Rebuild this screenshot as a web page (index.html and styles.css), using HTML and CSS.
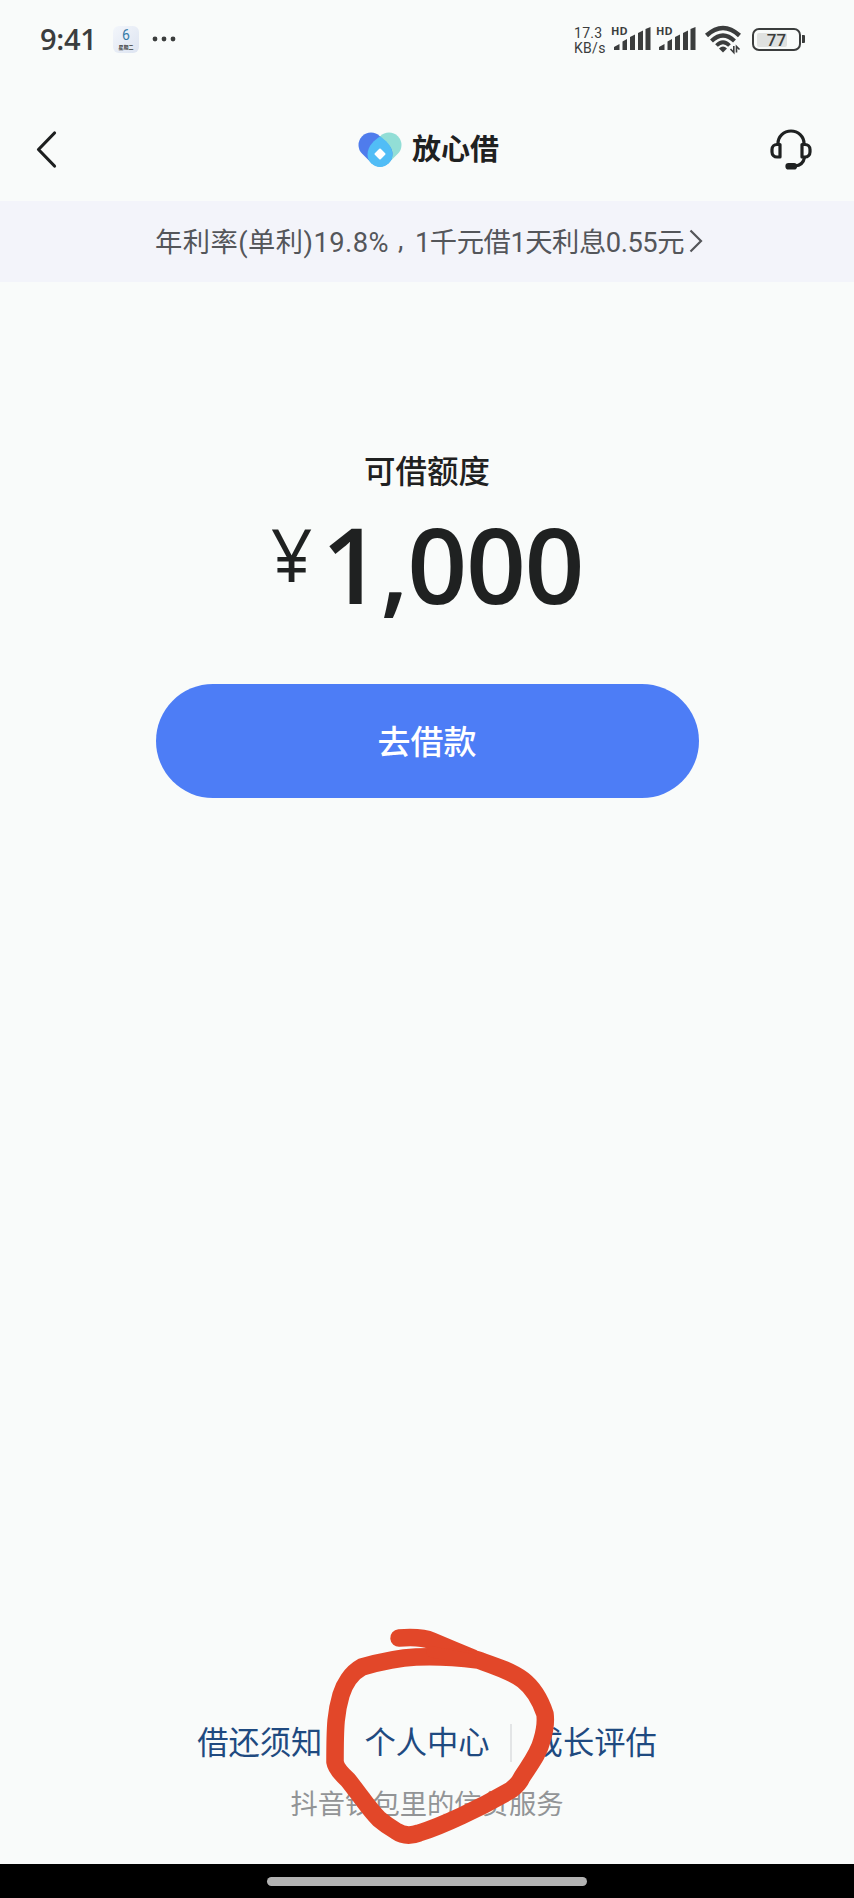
FILE: index.html
```html
<!DOCTYPE html>
<html lang="zh-CN">
<head>
    <meta charset="UTF-8">
    <meta name="viewport" content="width=device-width, initial-scale=1.0">
    <title>放心借</title>
    <link rel="stylesheet" href="styles.css">
</head>
<body>
    <div class="screen">
        <div class="status-bar">
            <div class="status-left">
                <span class="time">9:41</span>
                <div class="calendar">
                    <span class="calendar-day">6</span>
                    <span class="calendar-week">星期二</span>
                </div>
                <svg class="dots" width="24" height="6" viewBox="0 0 24 6" fill="#3b3d3d">
                    <circle cx="3" cy="3" r="2.4"/>
                    <circle cx="12" cy="3" r="2.4"/>
                    <circle cx="21" cy="3" r="2.4"/>
                </svg>
            </div>
            <div class="status-right">
                <div class="speed">
                    <span>17.3</span>
                    <span>KB/s</span>
                </div>
                <div class="signal">
                    <span class="hd">HD</span>
                    <svg width="38" height="24" viewBox="0 0 38 24" fill="#3b3d3d">
                        <path d="M0 23v-3l5.500-3v6zM8.500 23v-8.500l4.500-2.500v11zM16 23V10l5-2.500V23zM24 23V6l5-2.500V23zM31.500 23V2l5-2v23z"/>
                    </svg>
                </div>
                <div class="signal">
                    <span class="hd">HD</span>
                    <svg width="38" height="24" viewBox="0 0 38 24" fill="#3b3d3d">
                        <path d="M0 23v-3l5.500-3v6zM8.500 23v-8.500l4.500-2.500v11zM16 23V10l5-2.500V23zM24 23V6l5-2.500V23zM31.500 23V2l5-2v23z"/>
                    </svg>
                </div>
                <svg class="wifi" width="36" height="27" viewBox="0 0 36 27" fill="none" stroke="#3b3d3d">
                    <path d="M1.500 9.500Q18-5.500 34.500 9.500" stroke-width="4.500"/>
                    <path d="M6.500 15Q18 4 29.500 15" stroke-width="4.200"/>
                    <path d="M11.500 19.500Q18 13 24.500 19.500" stroke-width="3.800"/>
                    <path d="M14 22.500Q18 18.500 22 22.500L18 26.500z" fill="#3b3d3d" stroke="none"/>
                    <path d="M28.800 20v6.500L25.500 23M31.500 26.500V20.500L34.500 23.500" stroke-width="1.600"/>
                </svg>
                <div class="battery">
                    <div class="battery-body"><div class="battery-level"></div><span>77</span></div>
                    <div class="battery-tip"></div>
                </div>
            </div>
        </div>

        <div class="nav">
            <svg class="back" width="22" height="38" viewBox="0 0 22 38" fill="none" stroke="#1d1f1f" stroke-width="3.200" stroke-linecap="round" stroke-linejoin="round">
                <path d="M18.500 2L2.500 18.500L18.500 35"/>
            </svg>
            <div class="brand">
                <svg width="44" height="36" viewBox="0 0 44 36" fill="none" stroke-linecap="round">
                    <path d="M31 13L22 22" stroke="#92ded6" stroke-width="25"/>
                    <path d="M13 13L22 22" stroke="#4f7cec" stroke-width="25"/>
                    <path d="M22 4.500C27 7.500 34.500 14 34.500 22.500A12.500 12.500 0 0 1 9.500 22.500C9.500 14 17 7.500 22 4.500z" fill="#51bdf6"/>
                    <path d="M22 17.500L26.500 22L22 26.500L17.500 22z" fill="#fff" stroke="#fff" stroke-width="2" stroke-linejoin="round"/>
                </svg>
                <span>放心借</span>
            </div>
            <svg class="service" width="44" height="42" viewBox="0 0 44 42" fill="none" stroke="#1f2121" stroke-width="3.200" stroke-linejoin="round">
                <path d="M9 15.500V14.500A13 12.500 0 0 1 35 14.500V15.500"/>
                <path d="M11 15.500H8A5 5 0 0 0 3 20.500V23A5 5 0 0 0 8 28H11z"/>
                <path d="M33 15.500H36A5 5 0 0 1 41 20.500V23A5 5 0 0 1 36 28H33z"/>
                <path d="M35.500 28.500Q34 36.500 26 37"/>
                <rect x="18" y="35.500" width="8.500" height="3.500" rx="1.500" fill="#1f2121"/>
            </svg>
        </div>

        <div class="rate">
            <span class="yearly">年利率(单利)19.8%</span>
            <span class="comma">,</span>
            <span class="interest">1千元借1天利息0.55元</span>
            <svg width="14" height="24" viewBox="0 0 14 24" fill="none" stroke="#54565a" stroke-width="2.200">
                <path d="M1.500 1.500L12 12L1.500 22.500"/>
            </svg>
        </div>

        <div class="quota">
            <div class="quota-label">可借额度</div>
            <div class="amount">
                <span class="currency">¥</span>
                <span class="number">1,000</span>
            </div>
            <button class="borrow-btn">去借款</button>
        </div>

        <div class="footer">
            <div class="links">
                <a>借还须知</a>
                <a>个人中心</a>
                <a>成长评估</a>
            </div>
            <div class="source">抖音钱包里的信贷服务</div>
            <!-- hand-drawn marker around 个人中心 -->
            <svg class="marker" width="240" height="230" viewBox="0 0 240 230" fill="none" stroke="#e24729" stroke-width="17.500" stroke-linecap="round" stroke-linejoin="round">
                <path d="M79 16C92 15 103 15 112 19C126 25 138 30 153 36"/>
                <path d="M158 38C134 35 114 34 96 35C76 36 56 41 42 45C31 51 24 63 21 73C16 90 15 102 15 140Q16 147 28 158C40 173 49 187 59 197C66 203 71 206 76 209Q86 216 99 211C122 204 160 186 191 168Q199 162 202 155C211 141 219 131 222 118C225 108 226 100 225 92C220 77 212 65 203 58C191 49 175 44 158 38z"/>
                <path d="M112 30L150 37" stroke-width="11"/>
            </svg>
        </div>

        <div class="home-bar"><div class="home-pill"></div></div>
    </div>
</body>
</html>
```

FILE: styles.css
```css
* {
    box-sizing: border-box;
}

body {
    margin: 0;
    font-family: Roboto, "Noto Sans CJK SC", sans-serif;
    background: #f9fbfa;
    color: #1f2121;
}

.screen {
    width: 854px;
    height: 1898px;
    display: flex;
    flex-direction: column;
    overflow: hidden;
}

svg {
    display: block;
    flex: none;
    overflow: visible;
}

/* Status bar */
.status-bar {
    height: 80px;
    padding: 0 49px 0 40px;
    display: flex;
    justify-content: space-between;
    color: #3b3d3d;
}

.status-left,
.status-right {
    height: 78px;
    display: flex;
    align-items: center;
}

.time {
    font-family: "Open Sans", sans-serif;
    font-size: 29px;
    font-weight: 600;
    line-height: 40px;
    width: 73px;
    letter-spacing: -0.3px;
}

.calendar {
    width: 26px;
    height: 27px;
    border-radius: 6px;
    background: linear-gradient(135deg, #f3f6fb, #dde4f1);
    display: flex;
    flex-direction: column;
    align-items: center;
}

.calendar-day {
    font-size: 14px;
    line-height: 19px;
    color: #387da8;
}

.calendar-week {
    font-size: 5px;
    line-height: 4px;
    font-weight: 700;
}

.dots {
    margin-left: 13px;
}

.speed {
    width: 40px;
    display: flex;
    flex-direction: column;
    font-size: 14px;
    line-height: 15px;
    padding-top: 3px;
    letter-spacing: 0.3px;
    white-space: nowrap;
}

.signal {
    position: relative;
    width: 38px;
    margin-right: 7px;
}

.hd {
    position: absolute;
    left: -3px;
    top: -2px;
    font-size: 11px;
    line-height: 11px;
    font-weight: 700;
    font-family: "Open Sans", sans-serif;
}

.wifi {
    margin-left: 1px;
    margin-right: 11px;
}

.battery {
    display: flex;
    align-items: center;
    gap: 1px;
}

.battery-body {
    width: 49px;
    height: 23px;
    border: 2px solid #3b3d3d;
    border-radius: 7px;
    padding: 3px;
    display: grid;
    align-items: center;
}

.battery-level,
.battery-body span {
    grid-area: 1 / 1;
}

.battery-level {
    width: 30px;
    height: 14px;
    border-radius: 2px;
    background: #dfe1e0;
}

.battery-body span {
    text-align: center;
    font-size: 17px;
    line-height: 14px;
    font-weight: 500;
}

.battery-tip {
    width: 3px;
    height: 8px;
    border-radius: 0 1px 1px 0;
    background: #3b3d3d;
}

/* Header */
.nav {
    height: 121px;
    padding: 18px 41px 0 36px;
    display: flex;
    align-items: center;
    justify-content: space-between;
}

.brand {
    display: flex;
    align-items: center;
    gap: 10px;
    margin-left: 30px;
    font-size: 29px;
    line-height: 40px;
    font-weight: 700;
}

.brand span {
    margin-top: 1px;
}

/* Rate notice */
.rate {
    height: 81px;
    padding: 0 0 4px 155px;
    background: #f3f4fa;
    display: flex;
    align-items: center;
    font-size: 27.3px;
    color: #54565a;
    white-space: nowrap;
}

.yearly {
    letter-spacing: 0.45px;
}

.comma {
    width: 26px;
    padding-left: 9px;
}

.interest {
    letter-spacing: -0.45px;
}

.rate svg {
    margin: 2px 0 0 5px;
}

/* Quota */
.quota {
    flex: 1;
    display: flex;
    flex-direction: column;
    align-items: center;
}

.quota-label {
    margin-top: 168px;
    font-size: 31.5px;
    line-height: 46px;
    font-weight: 500;
}

.amount {
    height: 127px;
    margin-top: 6px;
    display: flex;
    align-items: flex-start;
    font-family: "Open Sans", sans-serif;
    font-weight: 600;
}

.currency {
    font-size: 73px;
    line-height: 86px;
    margin-top: 9px;
    margin-right: 9px;
    font-weight: 500;
}

.number {
    font-size: 105px;
    line-height: 124px;
    letter-spacing: -1.4px;
}

.borrow-btn {
    width: 543px;
    height: 114px;
    margin-top: 55px;
    padding: 0 0 3px;
    border: none;
    border-radius: 57px;
    background: #4d7df6;
    color: #fff;
    font-family: inherit;
    font-size: 33px;
    font-weight: 500;
}

/* Footer */
.footer {
    position: relative;
    height: 145px;
    display: flex;
    flex-direction: column;
    align-items: center;
}

.links {
    display: flex;
    color: #1f4a80;
    font-size: 31.3px;
    line-height: 38px;
    margin-top: 5px;
}

.links a {
    padding: 1px 20px 0;
    height: 38px;
    border-right: 2px solid #e3e5e6;
}

.links a:last-child {
    border-right: none;
}

.source {
    margin-top: 24px;
    font-size: 27.3px;
    line-height: 38px;
    color: #929496;
}

.marker {
    position: absolute;
    left: 320px;
    top: -97px;
}

/* Gesture bar */
.home-bar {
    height: 34px;
    background: #000;
    display: flex;
    justify-content: center;
    align-items: flex-start;
    padding-top: 13px;
}

.home-pill {
    width: 320px;
    height: 9px;
    border-radius: 5px;
    background: #b3b3b3;
}
```
